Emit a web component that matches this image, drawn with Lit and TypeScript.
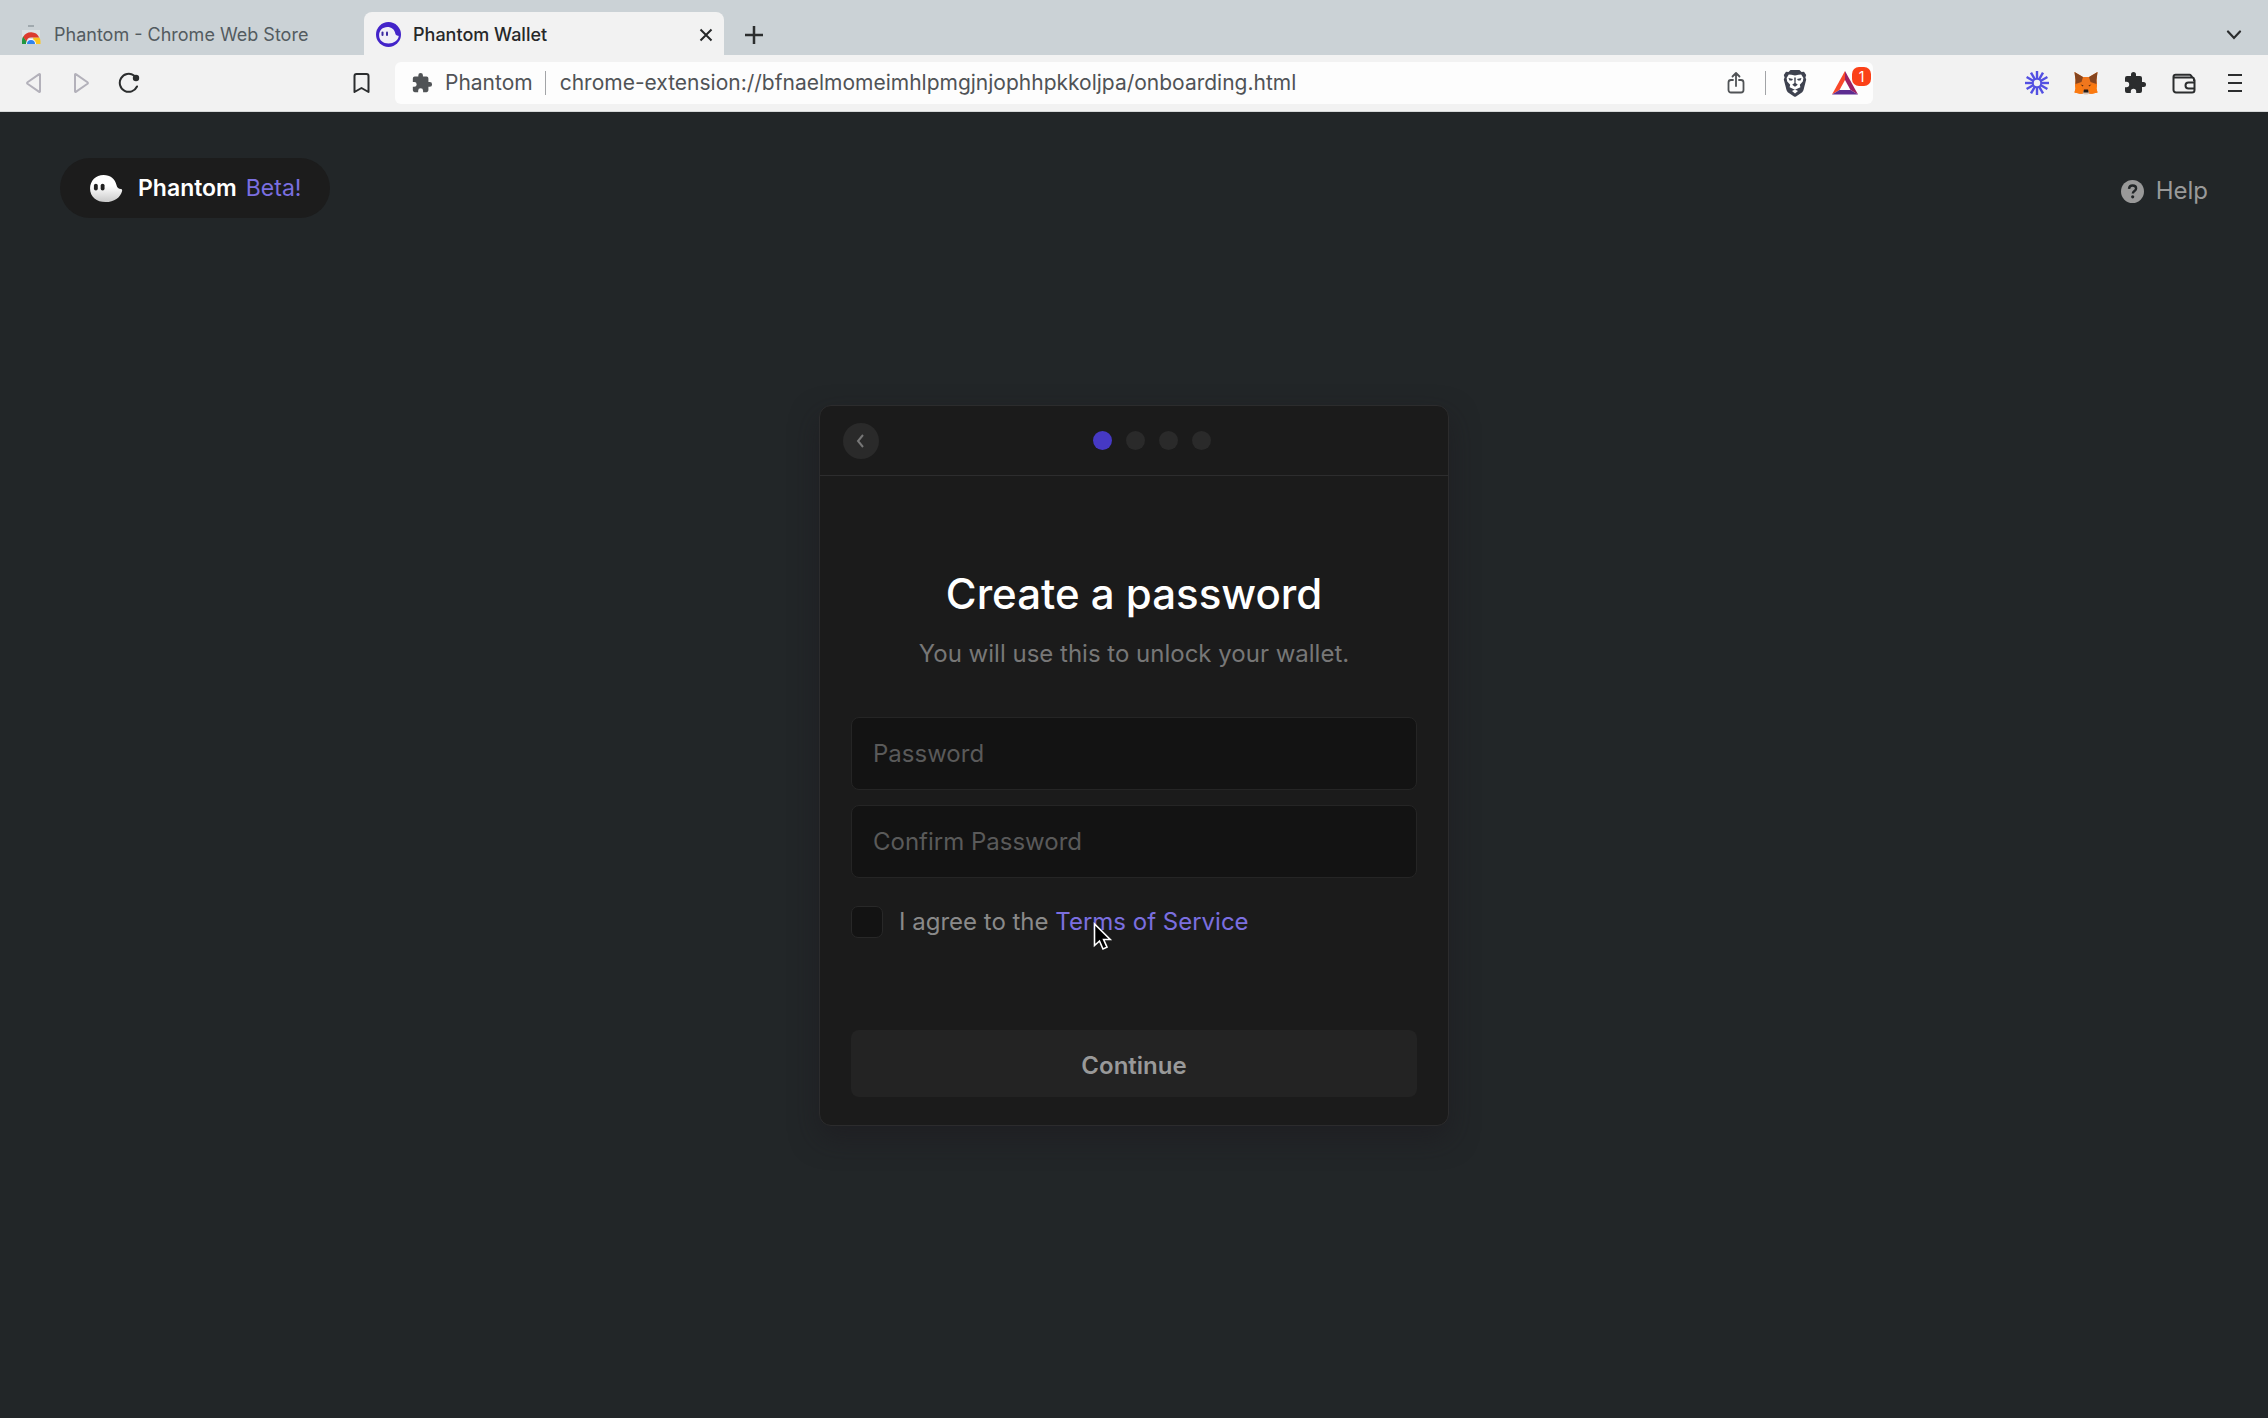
import { LitElement, html, css, svg } from "lit";
import { customElement, state } from "lit/decorators.js";

const puzzle = svg`<path d="M20.5 11H19V7a2 2 0 0 0-2-2h-4V3.500a2.5 2.500 0 0 0-5 0V5H4a2 2 0 0 0-2 2v3.800h1.500a2.700 2.700 0 0 1 0 5.400H2V20a2 2 0 0 0 2 2h3.800v-1.500a2.700 2.700 0 0 1 5.400 0V22H17a2 2 0 0 0 2-2v-4h1.500a2.500 2.500 0 0 0 0-5z" fill="currentColor"/>`;

const ghost = svg`<path d="M1 15C1 7 7 1 15 1c7 0 12 4 13.500 11 .5 2.500 2 3.500 4.500 3.500 1.200 0 1.500 1 1 2.500C32.500 24 26 29 17 29 8 29 1 24 1 15z"/>`;

@customElement("browser-chrome")
export class BrowserChrome extends LitElement {
  static styles = css`
    :host { display: block; font-family: Inter, "Liberation Sans", sans-serif; color: #2b2d2e; }
    * { box-sizing: border-box; }
    button { border: 0; padding: 0; margin: 0; background: none; color: inherit; font: inherit; display: flex; align-items: center; justify-content: center; cursor: pointer; }
    svg { display: block; flex: none; }
    .tabs { display: flex; align-items: flex-end; height: 55px; background: #cbd2d6; padding-right: 22px; }
    .tab { height: 43px; display: flex; align-items: center; font-size: 18px; line-height: 24px; white-space: nowrap; }
    .title { text-align: left; flex: 1; height: 43px; gap: 12px; padding-top: 2px; justify-content: flex-start; }
    .idle { width: 364px; padding: 0 20px; color: #535b60; }
    .active { width: 360px; padding: 0 6px 0 12px; background: #f2f2f2; border-radius: 8px 8px 0 0; font-weight: 500; color: #262829; }
    .square { width: 24px; height: 43px; padding-top: 2px; }
    .add { margin-left: 18px; }
    .spacer { flex: 1; }
    .bar { display: flex; align-items: center; height: 57px; padding: 0 22px; background: #f2f2f2; border-bottom: 1px solid #d6d8d9; }
    .nav { display: flex; gap: 24px; width: 328px; }
    .icon { width: 24px; height: 24px; }
    .muted { color: #b3b1ba; }
    .mark { margin-right: 21px; }
    .address { display: flex; align-items: center; flex: 0 1 1478px; min-width: 0; height: 42px; padding: 0 2px 0 16px; background: #fdfdfd; border-radius: 6px; color: #505356; font-size: 21px; line-height: 28px; }
    .name { margin-left: 12px; }
    .rule { width: 1px; height: 24px; background: #a2a4a7; }
    .name + .rule { margin: 0 14px 0 12px; }
    .url { flex: 1; min-width: 0; border: 0; outline: 0; padding: 0; background: none; color: inherit; font: inherit; }
    .share { margin-right: 17px; }
    .shield { margin: 0 24px 0 17px; }
    .rewards { position: relative; width: 40px; height: 30px; justify-content: flex-start; }
    .badge { position: absolute; right: 0; top: -1px; width: 19px; height: 19px; border-radius: 7px; background: #fb4118; color: #fff; font-size: 14px; line-height: 19px; text-align: center; }
    .extensions { display: flex; gap: 25px; margin-left: auto; }
    .menu { margin: 0 -1px 0 2px; }
  `;

  render() {
    return html`
      <div class="tabs">
        <div class="tab idle">
          <button class="title">
            <svg width="22" height="22" viewBox="0 0 22 22" aria-hidden="true">
              <path d="M8 2h6" stroke="#929ba0" stroke-width="1.500"/>
              <path d="M2 6h18v10H2z" fill="#dde1e3"/>
              <path d="M2 20v-3.500c0-1.500.5-3 1.500-4.300L8 20z" fill="#23963f"/>
              <path d="M13 13.500h6.500c.6 1.200 1 2.600 1 4V20H14z" fill="#fbc51f"/>
              <path d="M3.200 13a9 9 0 0 1 16 0.500H11a4.500 4.500 0 0 0-4.300 4z" fill="#dc3b2e"/>
              <path d="M6 20a5 5 0 0 1 10 0z" fill="#fff"/>
              <path d="M7 20a4 4 0 0 1 8 0z" fill="#2f83ee"/>
            </svg>
            <span>Phantom - Chrome Web Store</span>
          </button>
        </div>
        <div class="tab active">
          <button class="title">
            <svg width="25" height="25" viewBox="0 0 50 50" aria-hidden="true">
              <circle cx="25" cy="25" r="25" fill="#4324c9"/>
              <g transform="translate(5 9) scale(1.180)" fill="#f0eff7">${ghost}</g>
              <rect x="11" y="19" width="4" height="9" rx="2" fill="#3b2aa0"/>
              <rect x="20" y="19" width="4" height="9" rx="2" fill="#3b2aa0"/>
            </svg>
            <span>Phantom Wallet</span>
          </button>
          <button class="square" aria-label="Close tab">
            <svg width="14" height="14" viewBox="0 0 14 14" fill="none" stroke="currentColor" stroke-width="2"><path d="M1.500 1.500l11 11M12.500 1.500l-11 11"/></svg>
          </button>
        </div>
        <button class="square add" aria-label="New tab">
          <svg width="18" height="18" viewBox="0 0 18 18" fill="none" stroke="currentColor" stroke-width="2.500"><path d="M9 0v18M0 9h18"/></svg>
        </button>
        <div class="spacer"></div>
        <button class="square" aria-label="Search tabs">
          <svg width="16" height="10" viewBox="0 0 16 10" fill="none" stroke="currentColor" stroke-width="2.200" stroke-linecap="round"><path d="M2 1.500l6 6.500 6-6.500"/></svg>
        </button>
      </div>

      <div class="bar">
        <div class="nav">
          <button class="icon muted" aria-label="Back">
            <svg width="24" height="24" viewBox="0 0 24 24" fill="none" stroke="currentColor" stroke-width="2" stroke-linejoin="round"><path d="M18 3.500v17a.5.5 0 0 1-.8.4L5.500 12.800a1 1 0 0 1 0-1.600L17.200 3.100a.5.5 0 0 1 .8.400z"/></svg>
          </button>
          <button class="icon muted" aria-label="Forward">
            <svg width="24" height="24" viewBox="0 0 24 24" fill="none" stroke="currentColor" stroke-width="2" stroke-linejoin="round"><path d="M5 3.500v17a.5.5 0 0 0 .8.400l11.700-8.100a1 1 0 0 0 0-1.600L5.800 3.100a.5.5 0 0 0-.8.400z"/></svg>
          </button>
          <button class="icon" aria-label="Reload">
            <svg width="24" height="24" viewBox="0 0 24 24" fill="none" stroke="currentColor" stroke-width="2" stroke-linecap="round"><path d="M16 4.500a9 9 0 1 0 3 11"/><circle cx="18" cy="7" r="3.200" fill="currentColor" stroke="none"/></svg>
          </button>
        </div>
        <button class="icon mark" aria-label="Bookmark this page">
          <svg width="24" height="24" viewBox="0 0 24 24" fill="none" stroke="currentColor" stroke-width="2" stroke-linejoin="round"><path d="M4.500 5a2 2 0 0 1 2-2h10a2 2 0 0 1 2 2v16l-7-4-7 4z"/></svg>
        </button>
        <div class="address">
          <svg width="22" height="22" viewBox="0 0 24 24" aria-hidden="true">${puzzle}</svg>
          <label class="name" for="url">Phantom</label>
          <span class="rule"></span>
          <input class="url" id="url" type="text" .value=${"chrome-extension://bfnaelmomeimhlpmgjnjophhpkkoljpa/onboarding.html"} />
          <button class="icon share" aria-label="Share">
            <svg width="22" height="24" viewBox="0 0 22 24" fill="none" stroke="currentColor" stroke-width="1.800" stroke-linejoin="round" stroke-linecap="round"><path d="M8 9H6a2.500 2.500 0 0 0-2.500 2.500V19A2.500 2.500 0 0 0 6 21.500h10a2.500 2.500 0 0 0 2.500-2.500v-7.500A2.500 2.500 0 0 0 16 9h-2M11 15V2.500M7.500 5.500L11 2l3.500 3.500"/></svg>
          </button>
          <span class="rule"></span>
          <button class="icon shield" aria-label="Shields">
            <svg width="24" height="28" viewBox="0 0 24 28">
              <path d="M7.500 1h9l2 2 2.500-.3L23.200 6l-.8 2.500.8 2-2.700 10.500c-.4 1.300-1 2-2 2.700L13 27.400a2 2 0 0 1-2 0l-5.500-3.700c-1-.7-1.600-1.400-2-2.700L.8 10.500l.8-2L.8 6 3 2.700l2.500.3z" fill="#3f4350"/>
              <path d="M12 6.500l3.500-.8 2.700-.2 2.200 3.500-.6 3.500-3 3.300.6 2.400-5.400 2.500-5.400-2.500.6-2.400-3-3.300L3.600 9l2.200-3.500 2.700.2z" fill="#fff"/>
              <path d="M5.500 9l4.500 1-1 1.500H6.500zM18.500 9L14 10l1 1.500h2.500zM11.200 8.500h1.600l-.2 5.500 2.200 1.800-2.800 2-2.800-2L11.400 14z" fill="#3f4350"/>
              <path d="M12 20.500l3 1.500-3 2.400L9 22z" fill="#fff"/>
            </svg>
          </button>
          <button class="rewards" aria-label="Rewards, 1 new">
            <svg width="28" height="26" viewBox="0 0 28 26">
              <path d="M14 1L1 24.500l7.500-4.500L14 10z" fill="#f9482a"/>
              <path d="M14 1l13 23.500-7.500-4.500L14 10z" fill="#9b1f63"/>
              <path d="M1 24.500h26L19.500 20h-11z" fill="#5d2d91"/>
            </svg>
            <span class="badge">1</span>
          </button>
        </div>
        <div class="extensions">
          <button class="icon" aria-label="Loom">
            <svg width="24" height="24" viewBox="-12 -12 24 24" stroke="#5350e2" stroke-width="2.400" fill="none">
              <circle r="4.200" stroke-width="2"/>
              ${[0, 30, 60, 90, 120, 150, 180, 210, 240, 270, 300, 330].map((a) => svg`<path d="M0-4.500V-12" transform="rotate(${a})"/>`)}
            </svg>
          </button>
          <button class="icon" aria-label="MetaMask">
            <svg width="24" height="24" viewBox="0 0 24 24">
              <path d="M.5 1L9 6h6l8.500-5-1 8 .5 4.500-.5 4 1 4-5.500 1.200L14.500 23h-5L6 22.700.5 21.500l1-4-.5-4L1.500 9z" fill="#f0761d"/>
              <path d="M.5 1L9 6l-1.500 5L1.500 13 1.500 9zM23.500 1L15 6l1.500 5 6 2V9z" fill="#86451f"/>
              <path d="M1 14l6.500-1 2 9L6 22.700.5 21.500l1-4zM23 14l-6.500-1-2 9 3.500.7 5.500-1.200-1-4z" fill="#fb7a10"/>
              <path d="M6.500 13.500l3 .8-.8 1.200zM17.500 13.500l-3 .8.8 1.200z" fill="#5b2b12"/>
              <path d="M9.500 20h5l1 2.500-2 1h-3l-2-1z" fill="#d9c3b3"/>
              <path d="M10 18.500h4l.7 3H9.300z" fill="#241b17"/>
            </svg>
          </button>
          <button class="icon" aria-label="Extensions">
            <svg width="24" height="24" viewBox="0 0 24 24">${puzzle}</svg>
          </button>
          <button class="icon" aria-label="Wallet">
            <svg width="24" height="24" viewBox="0 0 24 24" fill="none" stroke="currentColor" stroke-width="2" stroke-linejoin="round"><path d="M22 10V8.500a2 2 0 0 0-2-2H1.500M20.500 6.500l-1.500-2a2 2 0 0 0-1.500-.8H3.500a2 2 0 0 0-2 2V19a2.500 2.500 0 0 0 2.500 2.500h16a2.500 2.500 0 0 0 2.500-2.500V8.500M23 11.500h-6.500a3 3 0 0 0 0 6H23"/></svg>
          </button>
          <button class="icon menu" aria-label="Menu">
            <svg width="14" height="20" viewBox="0 0 14 20" stroke="currentColor" stroke-width="2"><path d="M0 2h14M0 10h14M0 18h14"/></svg>
          </button>
        </div>
      </div>
    `;
  }
}

@customElement("onboarding-card")
export class OnboardingCard extends LitElement {
  @state() private step = 0;

  static styles = css`
    :host { display: block; width: 100%; max-width: 630px; }
    * { box-sizing: border-box; }
    .card { background: #1b1b1b; border: 1px solid #2c2c2d; border-radius: 12px; box-shadow: 0 12px 28px rgba(28, 24, 30, 0.5); }
    .head { display: flex; align-items: center; height: 70px; padding: 0 23px; border-bottom: 1px solid #2d2d2e; }
    .back { display: flex; align-items: center; justify-content: center; width: 36px; height: 36px; padding: 0 2px 0 0; border: 0; border-radius: 50%; background: #2a2a2a; color: #777; }
    .steps { flex: 1; display: flex; justify-content: center; gap: 14px; margin: 0; padding: 0; list-style: none; }
    .dot { width: 19px; height: 19px; border-radius: 50%; background: #2a2a2a; }
    .current { background: #4639c4; }
    .form { display: flex; flex-direction: column; padding: 92px 31px 28px; }
    .title { margin: 0; font-size: 42px; line-height: 52px; font-weight: 500; color: #fff; text-align: center; }
    .lead { margin: 16px 0 45px; font-size: 24px; line-height: 36px; color: #777; text-align: center; }
    .field { width: 100%; height: 73px; margin: 0 0 15px; padding: 0 21px; border: 1px solid #252525; border-radius: 8px; background: #131313; color: #fff; font: inherit; font-size: 24px; outline: 0; }
    .field::placeholder { color: #5a5a5a; opacity: 1; }
    .agree { display: flex; align-items: center; gap: 16px; margin: 11px 0 90px; font-size: 24px; line-height: 36px; color: #8a8a8a; }
    .check { appearance: none; width: 32px; height: 32px; margin: 0; border: 1px solid #282828; border-radius: 7px; background: #131313; }
    .terms { color: #7b6fe0; text-decoration: none; }
    .go { height: 67px; padding: 4px 0 0; border: 0; border-radius: 8px; background: #232323; color: #999; font: inherit; font-size: 24px; font-weight: 600; }
  `;

  render() {
    return html`
      <section class="card">
        <header class="head">
          <button class="back" aria-label="Back">
            <svg width="8" height="14" viewBox="0 0 8 14" fill="none" stroke="currentColor" stroke-width="2"><path d="M7 1L2 7l5 6"/></svg>
          </button>
          <ol class="steps">
            ${[0, 1, 2, 3].map((i) => html`<li class=${i === this.step ? "dot current" : "dot"}></li>`)}
          </ol>
        </header>
        <form class="form" @submit=${(e: Event) => e.preventDefault()}>
          <h1 class="title">Create a password</h1>
          <p class="lead">You will use this to unlock your wallet.</p>
          <input class="field" type="password" aria-label="Password" placeholder="Password" autocomplete="new-password" />
          <input class="field" type="password" aria-label="Confirm Password" placeholder="Confirm Password" autocomplete="new-password" />
          <div class="agree">
            <input class="check" id="agree" type="checkbox" />
            <label for="agree">I agree to the <a class="terms" href="#terms">Terms of Service</a></label>
          </div>
          <button class="go" type="submit">Continue</button>
        </form>
      </section>
    `;
  }
}

@customElement("app-root")
export class AppRoot extends LitElement {
  static styles = css`
    :host { display: flex; flex-direction: column; min-height: 100vh; position: relative; background: #222628; font-family: Inter, "Liberation Sans", sans-serif; }
    * { box-sizing: border-box; }
    .top { display: flex; align-items: center; justify-content: space-between; padding: 46px 60px 0; }
    .brand { display: flex; align-items: center; height: 60px; padding: 0 29px; border-radius: 30px; background: #1c1c1c; font-size: 23px; line-height: 32px; font-weight: 600; color: #fff; }
    .word { margin: 0 9px 0 15px; }
    .beta { font-weight: 400; color: #7b6fe0; }
    .help { display: flex; align-items: center; gap: 12px; margin-top: 6px; font-size: 24px; line-height: 32px; color: #999; text-decoration: none; }
    .main { display: flex; justify-content: center; padding: 187px 24px 48px; }
    .pointer { position: absolute; left: 1093px; top: 922px; }
    svg { display: block; flex: none; }
  `;

  render() {
    return html`
      <browser-chrome></browser-chrome>
      <header class="top">
        <div class="brand">
          <svg width="34" height="29" viewBox="0 0 35 30" aria-hidden="true">
            <defs><linearGradient id="g" x2="0" y2="1"><stop offset=".4" stop-color="#fff"/><stop offset="1" stop-color="#c9c9c9"/></linearGradient></defs>
            <g fill="url(#g)">${ghost}</g>
            <rect x="5" y="10" width="4" height="7" rx="2" fill="#222"/>
            <rect x="12" y="10" width="4" height="7" rx="2" fill="#222"/>
          </svg>
          <span class="word">Phantom</span><span class="beta">Beta!</span>
        </div>
        <a class="help" href="#help">
          <svg width="23" height="23" viewBox="0 0 23 23" aria-hidden="true">
            <circle cx="11.500" cy="11.500" r="11.500" fill="#999"/>
            <path d="M8 8.800c.2-2.200 1.600-3.300 3.600-3.300s3.500 1.200 3.500 3c0 2.500-3.300 2.500-3.300 5" fill="none" stroke="#222628" stroke-width="2.400"/>
            <circle cx="11.700" cy="16.800" r="1.600" fill="#222628"/>
          </svg>
          Help
        </a>
      </header>
      <main class="main"><onboarding-card></onboarding-card></main>
      <svg class="pointer" width="20" height="29" viewBox="0 0 20 29" aria-hidden="true">
        <path d="M1.500 2v21.500l5-4.500 3.500 8 4-1.800-3.400-7.700h6.600z" fill="#000" stroke="#fff" stroke-width="1.600"/>
      </svg>
    `;
  }
}
